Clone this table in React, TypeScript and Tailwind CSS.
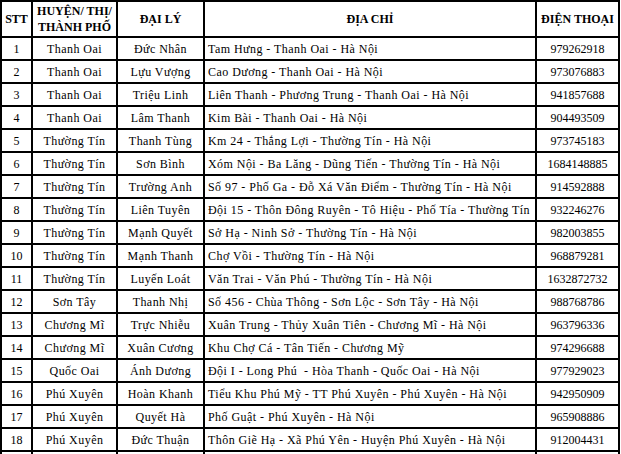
import React from "react";

const rows: [string, string, string, string][] = [
  ["Thanh Oai", "Đức Nhân", "Tam Hưng - Thanh Oai - Hà Nội", "979262918"],
  ["Thanh Oai", "Lựu Vượng", "Cao Dương - Thanh Oai - Hà Nội", "973076883"],
  ["Thanh Oai", "Triệu Linh", "Liên Thanh - Phương Trung - Thanh Oai - Hà Nội", "941857688"],
  ["Thanh Oai", "Lâm Thanh", "Kim Bài - Thanh Oai - Hà Nội", "904493509"],
  ["Thường Tín", "Thanh Tùng", "Km 24 - Thắng Lợi - Thường Tín - Hà Nội", "973745183"],
  ["Thường Tín", "Sơn Bình", "Xóm Nội - Ba Lăng - Dũng Tiến - Thường Tín - Hà Nội", "1684148885"],
  ["Thường Tín", "Trường Anh", "Số 97 - Phố Ga - Đỗ Xá Văn Điểm - Thường Tín - Hà Nội", "914592888"],
  ["Thường Tín", "Liên Tuyên", "Đội 15 - Thôn Đông Ruyên - Tô Hiệu - Phố Tía - Thường Tín", "932246276"],
  ["Thường Tín", "Mạnh Quyết", "Sở Hạ - Ninh Sở - Thường Tín - Hà Nội", "982003855"],
  ["Thường Tín", "Mạnh Thanh", "Chợ Vồi - Thường Tín - Hà Nội", "968879281"],
  ["Thường Tín", "Luyến Loát", "Văn Trai - Văn Phú - Thường Tín - Hà Nội", "1632872732"],
  ["Sơn Tây", "Thanh Nhị", "Số 456 - Chùa Thông - Sơn Lộc - Sơn Tây - Hà Nội", "988768786"],
  ["Chương Mĩ", "Trực Nhiễu", "Xuân Trung - Thủy Xuân Tiên - Chương Mĩ - Hà Nội", "963796336"],
  ["Chương Mĩ", "Xuân Cương", "Khu Chợ Cá - Tân Tiến - Chương Mỹ", "974296688"],
  ["Quốc Oai", "Ánh Dương", "Đội I - Long Phú  - Hòa Thanh - Quốc Oai - Hà Nội", "977929023"],
  ["Phú Xuyên", "Hoàn Khanh", "Tiểu Khu Phú Mỹ - TT Phú Xuyên - Phú Xuyên - Hà Nội", "942950909"],
  ["Phú Xuyên", "Quyết Hà", "Phố Guật - Phú Xuyên - Hà Nội", "965908886"],
  ["Phú Xuyên", "Đức Thuận", "Thôn Giẽ Hạ - Xã Phú Yên - Huyện Phú Xuyên - Hà Nội", "912004431"],
];

const cell = "bg-white flex items-center h-[21px] whitespace-pre overflow-hidden";

export default function App() {
  return (
    <div
      className="w-[621px] h-[454px] overflow-hidden bg-white text-black text-[12px] leading-[16px]"
      style={{ fontFamily: '"Liberation Serif", "Times New Roman", serif' }}
    >
      <div className="grid grid-cols-[29px_83px_85px_330px_81px] gap-[2px] p-[2px] bg-black w-[620px]">
        <div className="bg-white h-[34px] flex items-center justify-center font-bold">STT</div>
        <div className="bg-white h-[34px] flex flex-col items-center justify-center font-bold text-center">
          <span>HUYỆN/ THỊ/</span>
          <span>THÀNH PHỐ</span>
        </div>
        <div className="bg-white h-[34px] flex items-center justify-center font-bold">ĐẠI LÝ</div>
        <div className="bg-white h-[34px] flex items-center justify-center font-bold">ĐỊA CHỈ</div>
        <div className="bg-white h-[34px] flex items-center justify-center font-bold">ĐIỆN THOẠI</div>
        {rows.map((r, i) => (
          <React.Fragment key={i}>
            <div className={cell + " justify-center"}>{i + 1}</div>
            <div className={cell + " justify-center tracking-[0.45px]"}>{r[0]}</div>
            <div className={cell + " justify-center tracking-[0.45px]"}>{r[1]}</div>
            <div className={cell + " pl-[3px] tracking-[0.45px]"}>{r[2]}</div>
            <div className={cell + " justify-center"}>{r[3]}</div>
          </React.Fragment>
        ))}
        <div className={cell}></div>
        <div className={cell}></div>
        <div className={cell}></div>
        <div className={cell}></div>
        <div className={cell}></div>
      </div>
    </div>
  );
}
